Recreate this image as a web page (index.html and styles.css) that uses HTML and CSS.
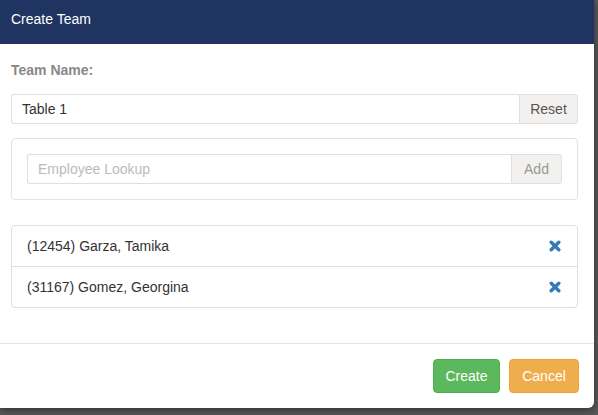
FILE: index.html
```html
<!DOCTYPE html>
<html>
<head>
<meta charset="utf-8">
<link rel="stylesheet" href="styles.css">
</head>
<body>
<div class="modal">
  <div class="modal-header">Create Team</div>
  <div class="modal-body">
    <div class="label">Team Name:</div>
    <div class="input-group">
      <div class="input">Table 1</div>
      <div class="addon">Reset</div>
    </div>
    <div class="well">
      <div class="input-group inner">
        <div class="input placeholder">Employee Lookup</div>
        <div class="addon disabled">Add</div>
      </div>
    </div>
    <div class="list">
      <div class="row"><span>(12454) Garza, Tamika</span>
        <svg class="x" viewBox="0 0 12 12"><path d="M2.2 2.2L9.8 9.8M9.8 2.2L2.2 9.8"/></svg></div>
      <div class="row"><span>(31167) Gomez, Georgina</span>
        <svg class="x" viewBox="0 0 12 12"><path d="M2.2 2.2L9.8 9.8M9.8 2.2L2.2 9.8"/></svg></div>
    </div>
  </div>
  <div class="modal-footer">
    <div class="btn btn-create">Create</div>
    <div class="btn btn-cancel">Cancel</div>
  </div>
</div>
</body>
</html>
```
FILE: styles.css
```css
html, body {
  margin: 0;
  padding: 0;
}
body {
  background: #585858;
  width: 598px;
  height: 415px;
  overflow: hidden;
  font-family: "Liberation Sans", Arial, sans-serif;
  font-size: 14px;
  color: #333;
}
.modal {
  width: 594px;
  height: 408px;
  background: #fff;
  border-bottom-right-radius: 6px;
  box-shadow: 0 2px 8px rgba(0,0,0,0.45);
  display: flex;
  flex-direction: column;
}
.modal-header {
  height: 44px;
  box-sizing: border-box;
  background: #203462;
  color: #fff;
  padding: 9px 11px 0;
  line-height: 20px;
  font-size: 14px;
}
.modal-body {
  padding: 16px 16px 0 11px;
  height: 300px;
  box-sizing: border-box;
  border-bottom: 1px solid #e5e5e5;
}
.label {
  font-weight: bold;
  color: #888;
  font-size: 14px;
  line-height: 20px;
  height: 20px;
  margin-bottom: 14px;
}
.input-group {
  display: flex;
  height: 30px;
  box-sizing: border-box;
}
.input {
  flex: 1;
  border: 1px solid #e2dedb;
  border-right: none;
  border-radius: 3px 0 0 3px;
  padding: 0 10px;
  line-height: 28px;
}
.input.placeholder {
  color: #bbb;
  padding: 0 10px;
}
.addon {
  width: 57px;
  border: 1px solid #e2dedb;
  background: #f3f1ef;
  border-radius: 0 3px 3px 0;
  text-align: center;
  line-height: 28px;
  color: #555;
}
.addon.disabled {
  width: 49px;
  color: #999;
}
.well {
  margin-top: 14px;
  border: 1px solid #e2e2e2;
  border-radius: 4px;
  padding: 15px;
}
.list {
  margin-top: 25px;
  border: 1px solid #dedede;
  border-radius: 4px;
}
.row {
  height: 40px;
  display: flex;
  align-items: center;
  justify-content: space-between;
  padding: 0 15px;
}
.row + .row {
  border-top: 1px solid #dedede;
}
.x {
  width: 12px;
  height: 12px;
  margin-right: 1px;
}
.x path {
  stroke: #337ab7;
  stroke-width: 3.4;
  stroke-linecap: round;
  fill: none;
}
.modal-footer {
  display: flex;
  justify-content: flex-end;
  gap: 9px;
  padding: 15px 15px 0;
}
.btn {
  height: 34px;
  box-sizing: border-box;
  line-height: 32px;
  border-radius: 4px;
  color: #fff;
  font-size: 14px;
  text-align: center;
}
.btn-create {
  background: #5cb85c;
  border: 1px solid #4cae4c;
  width: 67px;
}
.btn-cancel {
  background: #f0ad4e;
  border: 1px solid #eea236;
  width: 70px;
}
```
